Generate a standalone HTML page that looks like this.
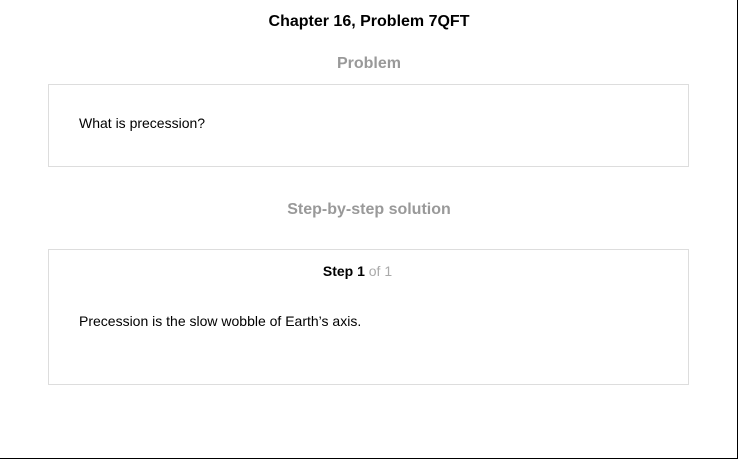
<!DOCTYPE html>
<html><head><style>
html,body{margin:0;padding:0;}
body{width:738px;height:459px;position:relative;background:#fff;font-family:"Liberation Sans",Arial,sans-serif;overflow:hidden;}
.frame{position:absolute;left:0;top:0;width:737px;height:458px;border-right:1px solid #000;border-bottom:1px solid #000;}
.t{position:absolute;white-space:nowrap;}
.box{position:absolute;left:48px;width:639px;border:1px solid #ddd;}
</style></head><body>
<div class="frame"></div>
<div class="t" style="left:0;width:738px;text-align:center;top:13px;font-size:16px;font-weight:bold;color:#000;">Chapter 16, Problem 7QFT</div>
<div class="t" style="left:0;width:738px;text-align:center;top:55px;font-size:16px;font-weight:bold;color:#999;">Problem</div>
<div class="box" style="top:84px;height:81px;"></div>
<div class="t" style="left:79px;top:115px;font-size:14px;color:#000;">What is precession?</div>
<div class="t" style="left:0;width:738px;text-align:center;top:201px;font-size:16px;font-weight:bold;color:#999;">Step-by-step solution</div>
<div class="box" style="top:249px;height:134px;"></div>
<div class="t" style="left:0;width:715px;text-align:center;top:263px;font-size:14px;color:#000;"><b>Step 1</b> <span style="color:#aaa">of 1</span></div>
<div class="t" style="left:79px;top:313px;font-size:14px;color:#000;">Precession is the slow wobble of Earth’s axis.</div>
</body></html>
